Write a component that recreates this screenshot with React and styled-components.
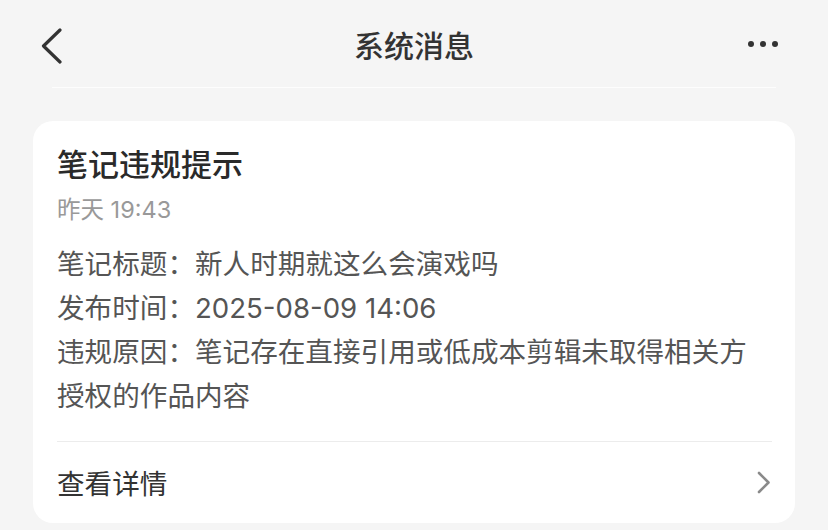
import React from 'react'
import styled, { createGlobalStyle } from 'styled-components'

const GlobalStyle = createGlobalStyle`
  html, body {
    margin: 0;
    padding: 0;
    background: #f5f5f5;
  }
  body {
    font-family: Inter, "Noto Sans CJK SC", "Noto Sans", sans-serif;
    -webkit-font-smoothing: antialiased;
  }
`

const Page = styled.div`
  width: 828px;
  height: 530px;
  background: #f5f5f5;
  overflow: hidden;
`

const NavBar = styled.header`
  height: 88px;
  display: grid;
  grid-template-columns: 80px 1fr 80px;
  align-items: center;
  position: relative;
  &:after {
    content: '';
    position: absolute;
    left: 52px;
    right: 52px;
    bottom: 0;
    height: 1px;
    background: #fdfdfd;
  }
`

const IconButton = styled.button`
  border: 0;
  background: none;
  padding: 0;
  display: flex;
  align-items: center;
  justify-content: ${p => (p.$right ? 'flex-end' : 'flex-start')};
  padding-left: ${p => (p.$right ? '0' : '40px')};
  padding-right: ${p => (p.$right ? '50px' : '0')};
  color: #333;
  height: 100%;
`

const NavTitle = styled.h1`
  margin: 0;
  text-align: center;
  font-size: 30px;
  font-weight: 500;
  color: #333;
  line-height: 40px;
  padding-top: 4px;
`

const Dots = styled.div`
  display: flex;
  gap: 6px;
  span {
    width: 6px;
    height: 6px;
    border-radius: 50%;
    background: #333;
  }
`

const Card = styled.article`
  margin: 33px 33px 0 33px;
  background: #fff;
  border-radius: 20px;
  padding: 24px 23px 0 24px;
  height: 402px;
  box-sizing: border-box;
  display: flex;
  flex-direction: column;
`

const CardTitle = styled.h2`
  margin: 0;
  font-size: 31px;
  font-weight: 500;
  line-height: 40px;
  color: #2a2a2a;
`

const Time = styled.div`
  margin-top: 9px;
  font-size: 23.5px;
  line-height: 32px;
  color: #999;
`

const Body = styled.div`
  margin-top: 16px;
  font-size: 27.6px;
  line-height: 44px;
  color: #555;
  padding-bottom: 23px;
  border-bottom: 1px solid #ececec;
`

const Row = styled.p`
  margin: 0;
`

const Footer = styled.div`
  flex: 1;
  display: flex;
  align-items: center;
  justify-content: space-between;
  padding-bottom: 2px;
  font-size: 27.6px;
  color: #333;
`

const Back = () => (
  <svg width="24" height="40" viewBox="0 0 24 40">
    <polyline points="20,6 3.5,22 20,38" fill="none" stroke="#333" strokeWidth="3.2" strokeLinecap="round" strokeLinejoin="round" />
  </svg>
)

const Chevron = () => (
  <svg width="16" height="24" viewBox="0 0 16 24">
    <polyline points="3,3 12.5,12.5 3,22" fill="none" stroke="#8a8a8a" strokeWidth="2.6" strokeLinecap="round" strokeLinejoin="round" />
  </svg>
)

const info = [
  ['笔记标题：', '新人时期就这么会演戏吗'],
  ['发布时间：', '2025-08-09 14:06'],
  ['违规原因：', '笔记存在直接引用或低成本剪辑未取得相关方授权的作品内容'],
]

export default function App() {
  return (
    <Page>
      <GlobalStyle />
      <NavBar>
        <IconButton aria-label="返回"><Back /></IconButton>
        <NavTitle>系统消息</NavTitle>
        <IconButton $right aria-label="更多">
          <Dots><span /><span /><span /></Dots>
        </IconButton>
      </NavBar>
      <Card>
        <CardTitle>笔记违规提示</CardTitle>
        <Time>昨天 19:43</Time>
        <Body>
          {info.map(([k, v]) => (
            <Row key={k}>{k}{v}</Row>
          ))}
        </Body>
        <Footer>
          <span>查看详情</span>
          <Chevron />
        </Footer>
      </Card>
    </Page>
  )
}
